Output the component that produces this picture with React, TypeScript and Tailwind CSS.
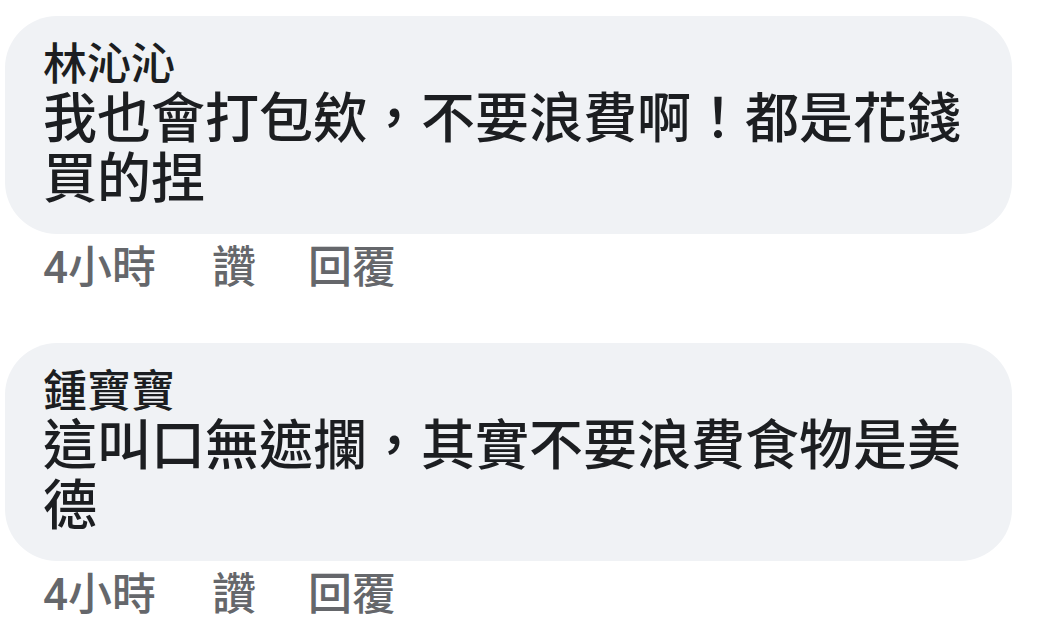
import React from "react";

type commentProps = {
  name: string;
  text: string;
  time: string;
};

const Comment: React.FC<commentProps> = ({ name, text, time }: commentProps) => {
  return (
    <div className="flex flex-col">
      <div className="w-[1007px] ml-[5px] rounded-[52px] bg-[#f0f2f5] pl-[38px] pr-[36px] pt-[24px] pb-[24px] text-[#1c1e21]">
        <p className="text-[44px] leading-[50px] font-medium">{name}</p>
        <p className="text-[54px] leading-[60px] font-medium">{text}</p>
      </div>
      <div className="flex items-center pl-[43px] pt-[8px] text-[44px] leading-[52px] font-medium text-[#65676b]">
        <span>{time}</span>
        <span className="ml-[56px]">讚</span>
        <span className="ml-[52px]">回覆</span>
      </div>
    </div>
  );
};

export default function App() {
  return (
    <div
      className="w-[1061px] h-[619px] bg-white overflow-hidden pt-[16px] flex flex-col gap-[49px] font-['Roboto','Noto_Sans_CJK_TC',sans-serif]"
    >
      <Comment
        name="林沁沁"
        text="我也會打包欸，不要浪費啊！都是花錢買的捏"
        time="4小時"
      />
      <Comment
        name="鍾寶寶"
        text="這叫口無遮攔，其實不要浪費食物是美德"
        time="4小時"
      />
    </div>
  );
}
